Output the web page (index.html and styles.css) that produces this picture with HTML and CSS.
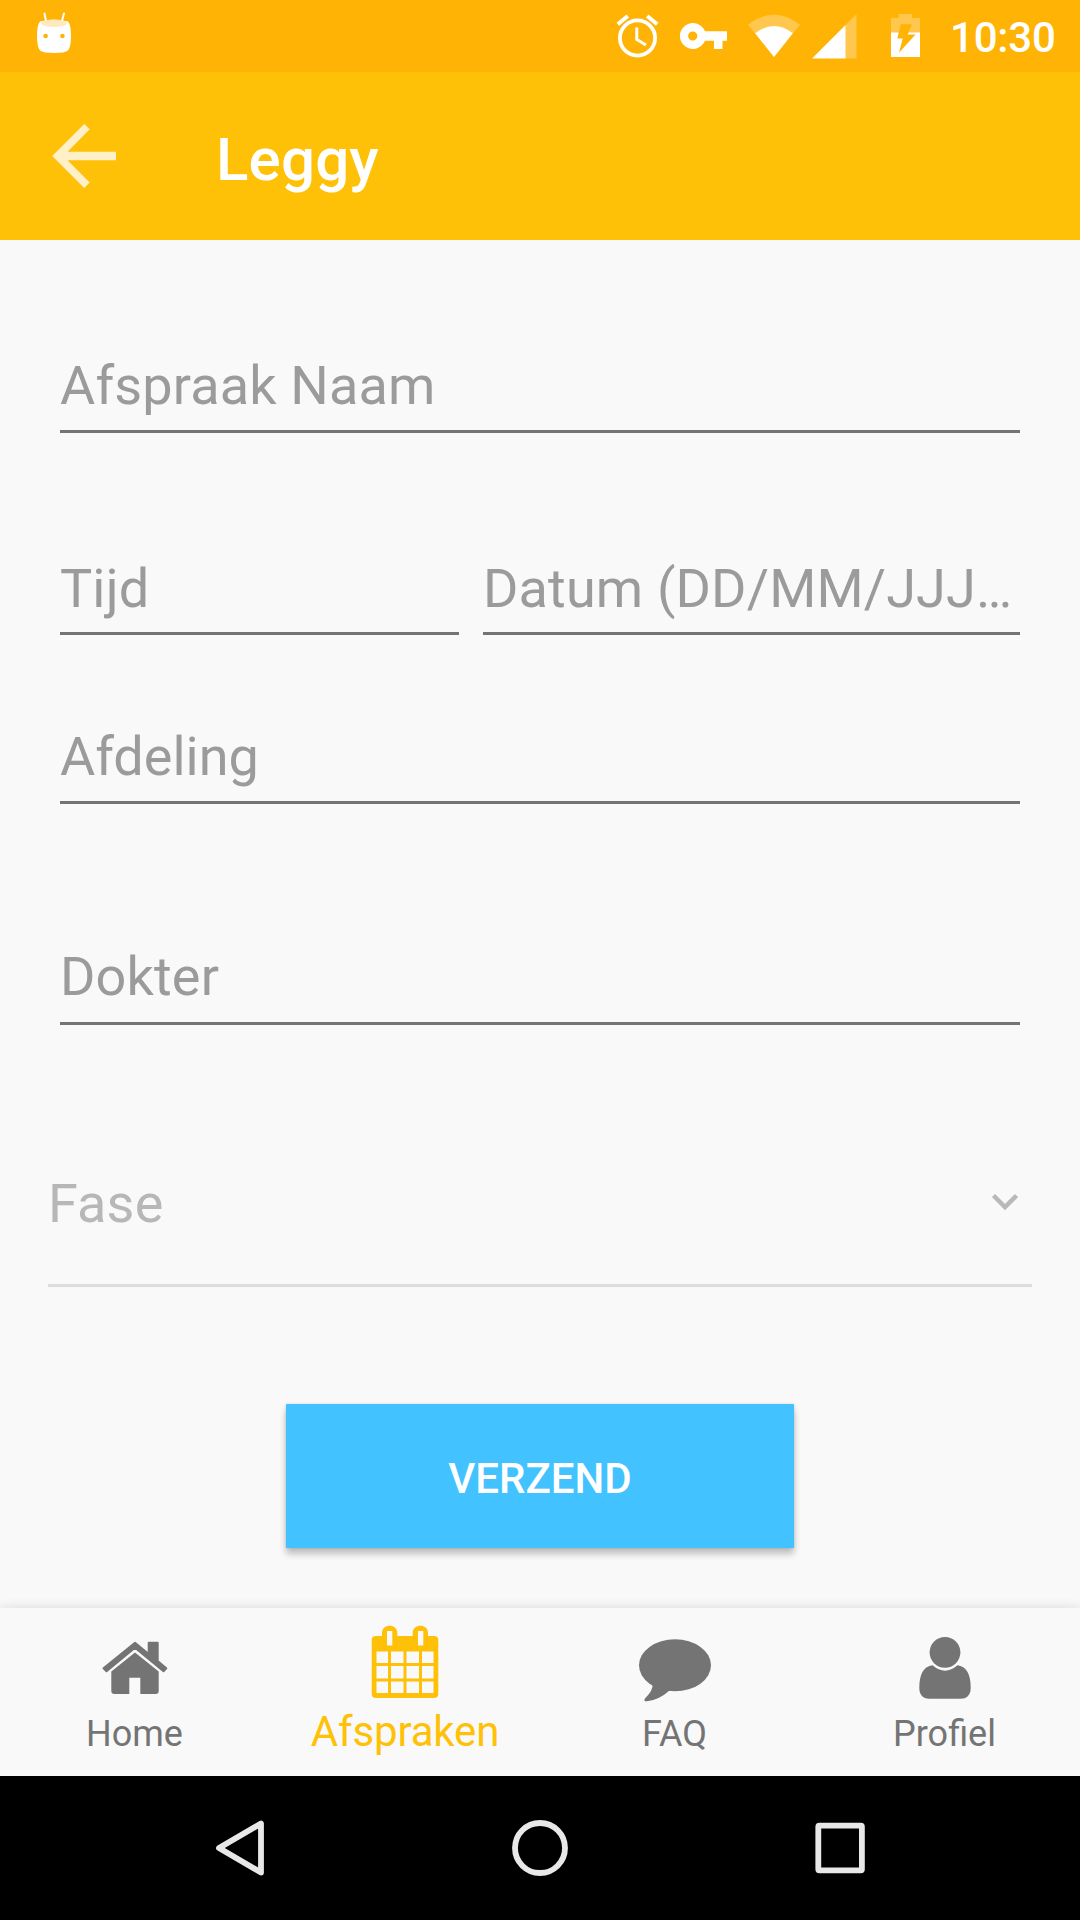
FILE: index.html
```html
<!DOCTYPE html>
<html lang="nl">
<head>
<meta charset="utf-8">
<title>Leggy</title>
<link rel="stylesheet" href="styles.css">
</head>
<body>
<div class="screen">
  <div class="status">
    <svg class="robot" viewBox="36 10 36 46" width="36" height="46">
      <path d="M44.500 13.500L46 21M64 13.500L62 21" stroke="#fff" stroke-width="2" stroke-linecap="round"/>
      <path d="M40 21.500Q54 18 68 21.500Q71 25 71 36Q71 47 68 50.500Q65 53 54 53Q43 53 40 50.500Q37 47 37 36Q37 25 40 21.500Z" fill="#fff"/>
      <ellipse cx="54" cy="23.300" rx="12.800" ry="3.700" fill="#ffe9bf"/>
      <circle cx="45.600" cy="36" r="2.300" fill="#ffb304"/><circle cx="62.400" cy="36" r="2.300" fill="#ffb304"/>
    </svg>
    <svg class="tray" viewBox="612 10 312 52" width="312" height="52">
      <g fill="none" stroke="#fff">
        <circle cx="637.500" cy="38" r="17.600" stroke-width="3.800"/>
        <path d="M617.800 24.300L627.800 16M647.200 16L657.200 24.300" stroke-width="4"/>
        <path d="M636.800 27.500V39.500L646 45" stroke-width="3"/>
      </g>
      <path fill="#fff" fill-rule="evenodd" d="M705 31.300H727V40.700H722.500V49H714V40.700H705A13 13 0 1 1 705 31.300ZM697.300 36A4.600 4.600 0 1 0 688.100 36A4.600 4.600 0 1 0 697.300 36Z"/>
      <path fill="#ffc74d" d="M774 57L748 24.700Q774 4.800 800 24.700Z"/>
      <path fill="#fff" d="M774 57L755.200 33.300Q774 18.800 792.800 33.300Z"/>
      <path fill="#ffc74d" d="M845 25.500L856.500 14V58.500H845Z"/>
      <path fill="#fff" d="M812 58.500L845.500 25V58.500Z"/>
      <path fill="#ffc74d" d="M891 18H898.700V14H912V18H920V33H891Z"/>
      <path fill="#fff" d="M891 32.500H920V57H891Z"/>
      <path fill="#ffb304" d="M900.700 24.300H912L907.700 34.500H915.500L899 52.700L902.700 38.500H897.300Z"/>
    </svg>
    <span class="clock">10:30</span>
  </div>
  <header class="appbar">
    <svg viewBox="50 122 68 68" width="68" height="68"><path fill="#fff0c8" d="M116 151.700H67.500L89.700 129.300L84.200 124L52.200 156L84.200 188L89.700 182.500L67.500 160.300H116Z"/></svg>
    <h1 class="title">Leggy</h1>
  </header>
  <main class="form">
    <div class="field name">Afspraak Naam</div>
    <div class="pair"><div class="field">Tijd</div><div class="field">Datum (DD/MM/JJJ…</div></div>
    <div class="field department">Afdeling</div>
    <div class="field doctor">Dokter</div>
    <div class="select"><span>Fase</span>
      <svg viewBox="990 1190 30 22" width="30" height="22"><path d="M993.500 1195.500L1005 1207L1016.500 1195.500" fill="none" stroke="#b9b9b9" stroke-width="4.500"/></svg>
    </div>
    <button class="send">VERZEND</button>
  </main>
  <nav class="tabs">
    <a class="tab">
      <svg viewBox="99 1622 72 80" width="72" height="80" fill="#747474">
        <path stroke="#747474" stroke-width="2" stroke-linejoin="round" d="M135 1642.700L148.700 1654V1642.700H157.700V1661L166.300 1668.300L163.500 1671.300L135 1647.800L106.500 1671.300L103.500 1668.300Z"/>
        <path d="M135 1652.500L158.700 1671.500V1691Q158.700 1694 155.700 1694H140.300V1677.700H129.300V1694H114.300Q111.300 1694 111.300 1691V1671.500Z"/>
      </svg>
      <span>Home</span>
    </a>
    <a class="tab active">
      <svg viewBox="369 1622 72 80" width="72" height="80">
        <path fill="#fec107" fill-rule="evenodd" d="M376 1636H382V1633C382 1623.300 397.300 1623.300 397.300 1633V1636H412.700V1633C412.700 1623.300 428 1623.300 428 1633V1636H434Q438.300 1636 438.300 1640V1694Q438.300 1698 434 1698H376Q371.700 1698 371.700 1694V1640Q371.700 1636 376 1636ZM387 1631V1645.500H392.300V1631ZM418 1631V1645.500H423.300V1631Z
        M376.500 1651.500H388V1663H376.500ZM391 1651.500H403.500V1663H391ZM406.500 1651.500H419V1663H406.500ZM422 1651.500H433.500V1663H422Z
        M376.500 1666H388V1678.500H376.500ZM391 1666H403.500V1678.500H391ZM406.500 1666H419V1678.500H406.500ZM422 1666H433.500V1678.500H422Z
        M376.500 1681.500H388V1693H376.500ZM391 1681.500H403.500V1693H391ZM406.500 1681.500H419V1693H406.500ZM422 1681.500H433.500V1693H422Z"/>
      </svg>
      <span>Afspraken</span>
    </a>
    <a class="tab">
      <svg viewBox="639 1622 72 80" width="72" height="80" fill="#747474"><ellipse cx="675" cy="1665.300" rx="36" ry="26"/><path d="M652.500 1684Q653.500 1690 645 1698.500Q643 1701.500 647 1701.300Q659 1700 669.500 1690.500L668 1680Z"/></svg>
      <span>FAQ</span>
    </a>
    <a class="tab">
      <svg viewBox="909 1622 72 80" width="72" height="80" fill="#747474"><circle cx="945" cy="1652.300" r="15.400"/><path d="M932.500 1665.300Q945 1676 957.500 1665.300Q970.700 1667 970.700 1688Q970.700 1694 967 1697Q965 1698.800 961 1698.800H929Q925 1698.800 923 1697Q919.300 1694 919.300 1688Q919.300 1667 932.500 1665.300Z"/></svg>
      <span>Profiel</span>
    </a>
  </nav>
  <footer class="system">
    <svg viewBox="210 1816 60 64" width="60" height="64"><path d="M219 1848L261 1823.500V1872.500Z" fill="none" stroke="#e8e8e8" stroke-width="5.800" stroke-linejoin="round"/></svg>
    <svg viewBox="510 1816 60 64" width="60" height="64"><circle cx="540" cy="1848" r="25" fill="none" stroke="#e8e8e8" stroke-width="5.800"/></svg>
    <svg viewBox="810 1816 60 64" width="60" height="64"><rect x="818.300" y="1825.700" width="43.600" height="44.600" rx="1" fill="none" stroke="#e8e8e8" stroke-width="5.800" stroke-linejoin="round"/></svg>
  </footer>
</div>
</body>
</html>
```
FILE: styles.css
```css
* { box-sizing: border-box; }
body { margin: 0; background: #f9f9f9; font-family: Roboto, sans-serif; }
svg { display: block; flex: none; }
.screen { width: 1080px; height: 1920px; display: flex; flex-direction: column; overflow: hidden; }

.status { height: 72px; flex: none; background: #ffb304; display: flex; align-items: flex-start; padding: 10px 25px 0 36px; }
.tray { margin-left: auto; margin-right: 26px; }
.clock { width: 105px; margin-top: 3px; color: #fff; font-size: 42px; line-height: 50px; font-weight: 500; letter-spacing: -0.2px; white-space: nowrap; }

.appbar { height: 168px; flex: none; background: #fec107; display: flex; align-items: flex-start; padding: 50px 50px 0; gap: 98px; }
.title { margin: 2px 0 0; color: #fff; font-size: 60px; line-height: 72px; font-weight: 500; letter-spacing: 0.2px; }

.form { height: 1368px; flex: none; padding: 114px 48px 0; display: flex; flex-direction: column; }
.field { height: 79px; margin: 0 12px; border-bottom: 3px solid #747474; color: #9b9b9b; font-size: 54px; line-height: 64px; letter-spacing: 0.15px; white-space: nowrap; }
.pair { display: grid; grid-template-columns: 399px 537px; gap: 24px; margin: 124px 12px 0; }
.pair .field { margin: 0; height: 78px; }
.department { margin-top: 90px; letter-spacing: 0; }
.doctor { height: 80px; margin-top: 141px; }
.select { height: 115px; margin-top: 147px; border-bottom: 3px solid #ddd; color: #b7b7b7; font-size: 54px; line-height: 64px; letter-spacing: 0.15px; display: flex; justify-content: space-between; align-items: flex-start; padding-right: 12px; }
.select svg { margin-top: 18px; }
.send { width: 508px; height: 144px; margin: 117px auto 0; padding: 5px 0 0; border: 0; border-radius: 1px; background: #42c2ff; color: #fff; font: 500 42px/50px Roboto, sans-serif; box-shadow: 0 6px 7px rgba(0,0,0,.24), 0 0 3px rgba(0,0,0,.15); }

.tabs { height: 168px; flex: none; display: grid; grid-template-columns: repeat(4, 1fr); background: #f9f9f9; box-shadow: 0 -1px 10px rgba(0,0,0,.11); }
.tab { display: flex; flex-direction: column; align-items: center; padding-top: 14px; color: #747474; font-size: 36px; line-height: 50px; }
.tab span { margin: 7px 1px 0 0; }
.tab.active { color: #fec107; font-size: 42px; }
.tab.active span { margin: 5px 0 0; letter-spacing: -0.15px; }

.system { height: 144px; flex: none; background: #000; display: flex; align-items: center; justify-content: space-between; padding: 0 210px; }
```
